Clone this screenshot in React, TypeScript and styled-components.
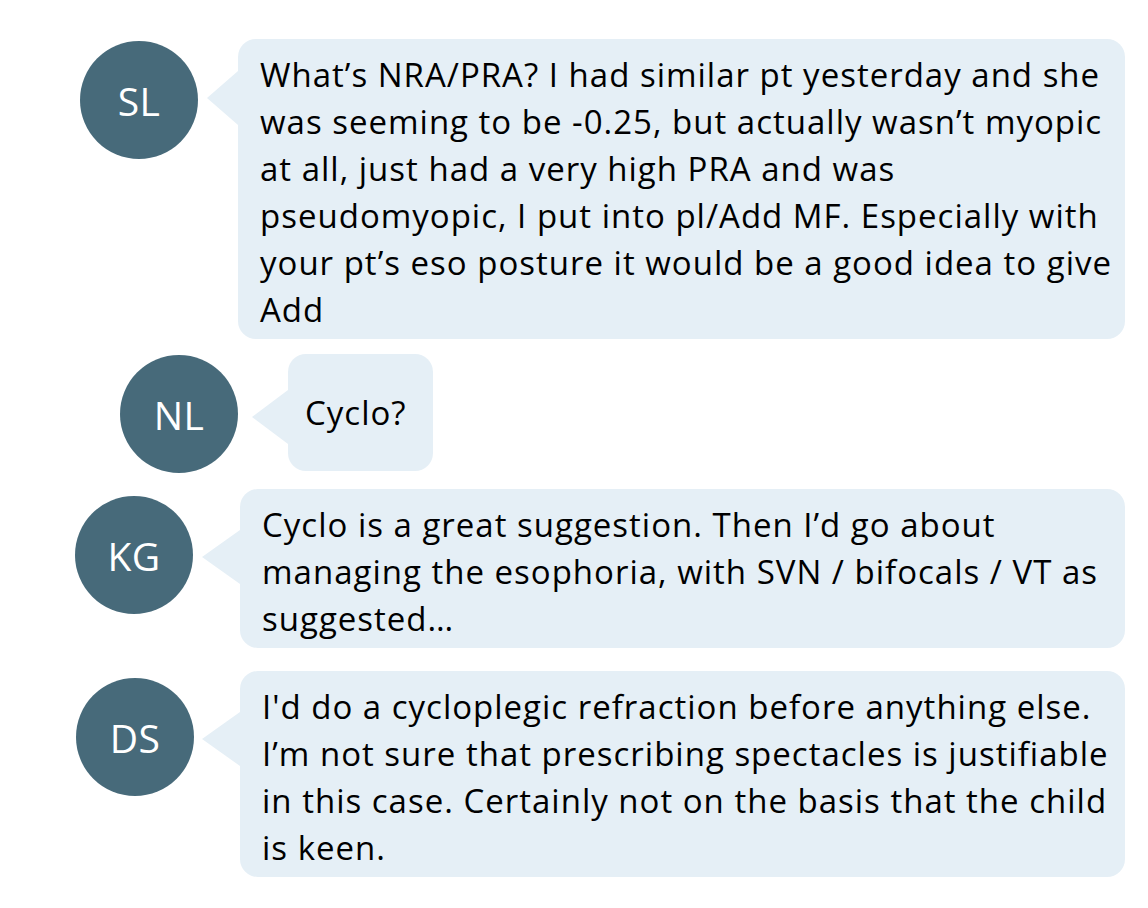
import styled, { createGlobalStyle } from "styled-components";

const GlobalStyle = createGlobalStyle`
  body {
    margin: 0;
    background: #ffffff;
    font-family: "Open Sans", Lato, sans-serif;
  }
`;

type Message = {
  initials: string;
  lines: string[];
  indent: number;
  avatarTop: number;
  tailGap: number;
  tailWidth: number;
  tailTop: number;
  spacing: number;
  width?: number;
  short?: boolean;
};

const messages: Message[] = [
  {
    initials: "SL",
    lines: [
      "What’s NRA/PRA? I had similar pt yesterday and she",
      "was seeming to be -0.25, but actually wasn’t myopic",
      "at all, just had a very high PRA and was",
      "pseudomyopic, I put into pl/Add MF. Especially with",
      "your pt’s eso posture it would be a good idea to give",
      "Add",
    ],
    indent: 80,
    avatarTop: 2,
    tailGap: 9,
    tailWidth: 31,
    tailTop: 32,
    spacing: 39,
    width: 887,
  },
  {
    initials: "NL",
    lines: ["Cyclo?"],
    indent: 120,
    avatarTop: 1,
    tailGap: 14,
    tailWidth: 36,
    tailTop: 36,
    spacing: 15,
    short: true,
  },
  {
    initials: "KG",
    lines: [
      "Cyclo is a great suggestion. Then I’d go about",
      "managing the esophoria, with SVN / bifocals / VT as",
      "suggested…",
    ],
    indent: 75,
    avatarTop: 7,
    tailGap: 9,
    tailWidth: 38,
    tailTop: 41,
    spacing: 16,
    width: 885,
  },
  {
    initials: "DS",
    lines: [
      "I'd do a cycloplegic refraction before anything else.",
      "I’m not sure that prescribing spectacles is justifiable",
      "in this case. Certainly not on the basis that the child",
      "is keen.",
    ],
    indent: 76,
    avatarTop: 7,
    tailGap: 8,
    tailWidth: 38,
    tailTop: 41,
    spacing: 23,
    width: 885,
  },
];

export default function App() {
  return (
    <>
      <GlobalStyle />
      <Thread>
        {messages.map((m) => (
          <Row key={m.initials} $indent={m.indent} $spacing={m.spacing}>
            <Avatar $top={m.avatarTop}>{m.initials}</Avatar>
            <Tail $gap={m.tailGap} $width={m.tailWidth} $top={m.tailTop} />
            <Bubble $width={m.width} $short={m.short}>
              {m.lines.map((line, i) => (
                <Line key={i}>{line}</Line>
              ))}
            </Bubble>
          </Row>
        ))}
      </Thread>
    </>
  );
}

const Thread = styled.main`
  display: flex;
  flex-direction: column;
  width: 1148px;
`;

const Row = styled.div<{ $indent: number; $spacing: number }>`
  display: flex;
  align-items: flex-start;
  padding-left: ${(p) => p.$indent}px;
  margin-top: ${(p) => p.$spacing}px;
`;

const Avatar = styled.div<{ $top: number }>`
  flex: none;
  width: 118px;
  height: 118px;
  margin-top: ${(p) => p.$top}px;
  border-radius: 50%;
  background-color: #476a7a;
  color: #ffffff;
  font-size: 39px;
  letter-spacing: 0.5px;
  display: flex;
  align-items: center;
  justify-content: center;
`;

const Tail = styled.div<{ $gap: number; $width: number; $top: number }>`
  flex: none;
  width: ${(p) => p.$width}px;
  height: 54px;
  margin-left: ${(p) => p.$gap}px;
  margin-top: ${(p) => p.$top}px;
  background-color: #e5eff6;
  clip-path: polygon(0 50%, 100% 0, 100% 100%);
`;

const Bubble = styled.div<{ $width?: number; $short?: boolean }>`
  box-sizing: border-box;
  width: ${(p) => (p.$width ? `${p.$width}px` : "auto")};
  min-height: ${(p) => (p.$short ? "117px" : "0")};
  padding: ${(p) => (p.$short ? "0 26px 0 17px" : "12px 20px 6px 22px")};
  display: flex;
  flex-direction: column;
  justify-content: center;
  background-color: #e5eff6;
  border-radius: 18px;
  color: #000000;
  font-size: 33px;
  letter-spacing: 1px;
  line-height: 47px;
`;

const Line = styled.span`
  white-space: nowrap;
`;
